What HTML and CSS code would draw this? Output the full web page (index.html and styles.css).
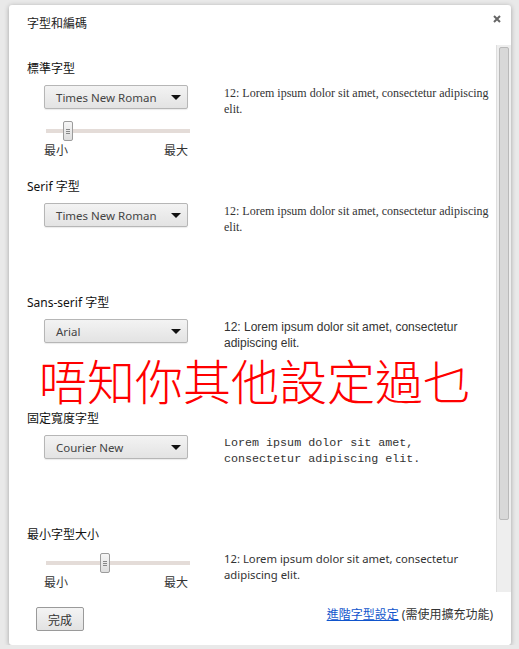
FILE: index.html
```html
<!DOCTYPE html>
<html lang="zh-Hant">
<head>
    <meta charset="UTF-8">
    <meta name="viewport" content="width=device-width, initial-scale=1.0">
    <title>字型和編碼</title>
    <link rel="stylesheet" href="styles.css">
</head>
<body>
    <div class="dialog">
        <div class="dialog-header">
            <h1>字型和編碼</h1>
            <svg class="close" width="8" height="8" viewBox="0 0 8 8"><path d="M1 1 L7 7 M7 1 L1 7" stroke="#666" stroke-width="2"/></svg>
        </div>

        <div class="dialog-body">
            <div class="content">
                <section class="font-section first">
                    <h3>標準字型</h3>
                    <div class="setting-row">
                        <div class="controls">
                            <div class="select"><span>Times New Roman</span><span class="arrow"></span></div>
                            <div class="slider">
                                <div class="track"></div>
                                <div class="thumb" style="left: 17px"></div>
                            </div>
                            <div class="slider-labels"><span>最小</span><span>最大</span></div>
                        </div>
                        <p class="sample serif">12: Lorem ipsum dolor sit amet, consectetur adipiscing elit.</p>
                    </div>
                </section>

                <section class="font-section">
                    <h3>Serif 字型</h3>
                    <div class="setting-row">
                        <div class="controls">
                            <div class="select"><span>Times New Roman</span><span class="arrow"></span></div>
                        </div>
                        <p class="sample serif">12: Lorem ipsum dolor sit amet, consectetur adipiscing elit.</p>
                    </div>
                </section>

                <section class="font-section">
                    <h3>Sans-serif 字型</h3>
                    <div class="setting-row">
                        <div class="controls">
                            <div class="select"><span>Arial</span><span class="arrow"></span></div>
                        </div>
                        <p class="sample sans">12: Lorem ipsum dolor sit amet, consectetur adipiscing elit.</p>
                    </div>
                </section>

                <section class="font-section">
                    <h3>固定寬度字型</h3>
                    <div class="setting-row">
                        <div class="controls">
                            <div class="select"><span>Courier New</span><span class="arrow"></span></div>
                        </div>
                        <p class="sample mono">Lorem ipsum dolor sit amet, consectetur adipiscing elit.</p>
                    </div>
                </section>

                <section class="font-section">
                    <h3>最小字型大小</h3>
                    <div class="setting-row">
                        <div class="controls">
                            <div class="slider min-size">
                                <div class="track"></div>
                                <div class="thumb" style="left: 54px"></div>
                            </div>
                            <div class="slider-labels"><span>最小</span><span>最大</span></div>
                        </div>
                        <p class="sample ui">12: Lorem ipsum dolor sit amet, consectetur adipiscing elit.</p>
                    </div>
                </section>
            </div>
            <div class="scrollbar"><div class="scroll-thumb"></div></div>
        </div>

        <div class="dialog-footer">
            <button class="done">完成</button>
            <div class="advanced"><a href="#">進階字型設定</a> (需使用擴充功能)</div>
        </div>

        <div class="overlay-text">唔知你其他設定過乜</div>
    </div>
</body>
</html>
```

FILE: styles.css
```css
body {
    margin: 0;
    padding: 5px 8px 0 9px;
    background-color: #e9e9e9;
    font-family: "Noto Sans", "Noto Sans CJK TC", sans-serif;
    font-size: 12px;
    color: #222;
}

.dialog {
    position: relative;
    width: 502px;
    height: 640px;
    background: white;
    border-radius: 3px;
    box-shadow: 0 1px 5px rgba(0, 0, 0, 0.3);
    display: flex;
    flex-direction: column;
}

.dialog-header {
    height: 40px;
    padding: 11px 0 0 18px;
    box-sizing: border-box;
    position: relative;
}

.dialog-header h1 {
    margin: 0;
    font-size: 12px;
    font-weight: normal;
    line-height: 16px;
}

.close {
    position: absolute;
    right: 10px;
    top: 10px;
}

.dialog-body {
    display: flex;
    height: 547px;
}

.content {
    flex: 1;
    padding: 16px 0 0 18px;
    overflow: hidden;
}

.scrollbar {
    width: 15px;
    background: #eeeeee;
    border-left: 1px solid #dedede;
    box-sizing: border-box;
    padding: 2px 2px 0 2px;
}

.scroll-thumb {
    height: 471px;
    background: #d8d8d8;
    border: 1px solid #b9b9b9;
    border-radius: 2px;
}

.font-section {
    height: 116px;
}

.font-section.first {
    height: 118px;
}

.font-section h3 {
    margin: 0;
    font-size: 12px;
    font-weight: normal;
    line-height: 16px;
    color: #111;
}

.setting-row {
    display: grid;
    grid-template-columns: 180px 270px;
    margin-top: 8px;
    padding-left: 17px;
}

.select {
    width: 144px;
    height: 24px;
    box-sizing: border-box;
    border: 1px solid #b6b6b6;
    border-radius: 2px;
    background: linear-gradient(#f3f3f3, #e3e3e3);
    box-shadow: 0 1px 1px rgba(0, 0, 0, 0.08);
    display: flex;
    align-items: center;
    justify-content: space-between;
    padding: 0 6px 0 11px;
    font-size: 11.5px;
    color: #444;
}

.arrow {
    width: 0;
    height: 0;
    border-left: 5px solid transparent;
    border-right: 5px solid transparent;
    border-top: 5px solid #111;
}

.slider {
    position: relative;
    width: 144px;
    height: 20px;
    margin: 12px 0 0 2px;
    display: flex;
    align-items: center;
}

.slider.min-size {
    margin-top: 2px;
}

.track {
    width: 100%;
    height: 4px;
    background: #e4dcd8;
}

.thumb {
    position: absolute;
    top: 0;
    width: 10px;
    height: 20px;
    box-sizing: border-box;
    border: 1px solid #9c9c9c;
    border-radius: 2px;
    background: linear-gradient(#f6f6f6, #dedede);
}

.thumb::after {
    content: "";
    position: absolute;
    left: 2px;
    top: 7px;
    width: 4px;
    height: 1px;
    background: #888;
    box-shadow: 0 2px 0 #888, 0 4px 0 #888;
}

.slider-labels {
    width: 144px;
    display: flex;
    justify-content: space-between;
    margin-top: 3px;
    line-height: 14px;
    color: #333;
}

.sample {
    margin: 0;
    line-height: 16px;
    font-size: 12px;
    color: #333;
}

.sample.serif { font-family: "Liberation Serif", serif; }
.sample.sans { font-family: "Liberation Sans", sans-serif; }
.sample.mono { font-family: "Liberation Mono", monospace; font-size: 11.7px; }
.sample.ui { font-family: "Noto Sans", sans-serif; font-size: 11.3px; }

.dialog-footer {
    flex: 1;
    display: flex;
    justify-content: space-between;
    align-items: flex-start;
    padding: 15px 18px 0 27px;
}

.done {
    width: 48px;
    height: 24px;
    font-family: "Noto Sans CJK TC", sans-serif;
    font-size: 12px;
    color: #333;
    border: 1px solid #9a9a9a;
    border-radius: 2px;
    background: linear-gradient(#f4f4f4, #e2e2e2);
    padding: 0;
}

.advanced {
    line-height: 16px;
    color: #333;
}

.advanced a {
    color: #1155cc;
}

.overlay-text {
    position: absolute;
    left: 30px;
    top: 352px;
    font-family: "Noto Sans CJK TC", sans-serif;
    font-weight: 300;
    font-size: 48px;
    line-height: 44px;
    color: #ff0000;
    white-space: nowrap;
}
```
